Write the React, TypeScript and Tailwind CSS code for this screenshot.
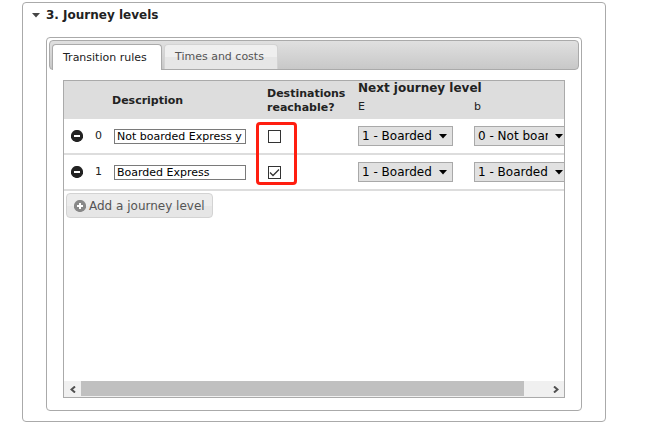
import { useState } from "react";

type Level = {
  id: number;
  description: string;
  reachable: boolean;
  next: [string, string];
};

const OPTIONS = ["0 - Not boarded Express y", "1 - Boarded Express"];

const INITIAL_LEVELS: Level[] = [
  { id: 0, description: "Not boarded Express y", reachable: false, next: [OPTIONS[1], OPTIONS[0]] },
  { id: 1, description: "Boarded Express", reachable: true, next: [OPTIONS[1], OPTIONS[1]] },
];

function CircleIcon({ plus = false, className }: { plus?: boolean; className: string }) {
  return (
    <svg viewBox="0 0 12 12" className={"size-3 shrink-0 " + className} aria-hidden="true">
      <circle cx="6" cy="6" r="6.1" fill="currentColor" />
      <path d={plus ? "M3 5h2V3h2v2h2v2H7v2H5V7H3z" : "M3 5h6v2H3z"} fill="#fff" />
    </svg>
  );
}

function LevelSelect({ label, value, onChange }: { label: string; value: string; onChange: (v: string) => void }) {
  return (
    <div className="relative h-5 w-[95px]">
      <select
        aria-label={label}
        value={value}
        onChange={(e) => onChange(e.target.value)}
        className="block h-5 w-full appearance-none rounded-none border border-[#a9a9a9] bg-[#e1e1e1] pr-5 pl-[3px] text-xs leading-4 text-black"
      >
        {OPTIONS.map((o) => (
          <option key={o}>{o}</option>
        ))}
      </select>
      <svg viewBox="0 0 8 5" className="pointer-events-none absolute top-2 right-1.5 h-[5px] w-2" aria-hidden="true">
        <path d="M0 0h8L4 4.5z" fill="#000" />
      </svg>
    </div>
  );
}

export default function App() {
  const [levels, setLevels] = useState(INITIAL_LEVELS);
  const [tab, setTab] = useState(0);

  const update = (id: number, patch: Partial<Level>) =>
    setLevels((all) => all.map((l) => (l.id === id ? { ...l, ...patch } : l)));

  return (
    <main className="bg-white pt-0.5 pr-[55px] pb-1.5 pl-[22px] font-['DejaVu_Sans',Verdana,sans-serif] text-[11px] leading-[14px] text-[#222]">
      <section className="rounded-[4px] border border-[#aaa] px-[23px] pb-2.5">
        <h3 className="-ml-3.5 flex h-[34px] items-start pt-1">
          <button type="button" className="flex items-center gap-1.5 text-xs font-bold">
            <svg viewBox="0 0 8 5" className="h-[5px] w-2" aria-hidden="true">
              <path d="M0 0h8L4 4.5z" fill="#454545" />
            </svg>
            3. Journey levels
          </button>
        </h3>

        <div className="rounded-[4px] border border-[#aaa] p-0.5">
          <div
            role="tablist"
            className="flex h-[30px] gap-0.5 rounded-[4px] border border-[#aaa] bg-linear-to-b from-[#e0e0e0] to-[#c8c8c8] pt-[3px] pl-0.5"
          >
            <button
              type="button"
              role="tab"
              aria-selected={tab === 0}
              onClick={() => setTab(0)}
              className="-mb-px w-[110px] rounded-t-[4px] border border-b-0 border-[#aaa] bg-white pl-2.5 text-left whitespace-nowrap text-[#212121]"
            >
              Transition rules
            </button>
            <button
              type="button"
              role="tab"
              aria-selected={tab === 1}
              onClick={() => setTab(1)}
              className="w-[114px] rounded-t-[4px] border border-b-0 border-[#d3d3d3] bg-linear-to-b from-[#efefef] from-50% to-[#e6e6e6] to-50% pl-2.5 text-left whitespace-nowrap text-[#555]"
            >
              Times and costs
            </button>
          </div>

          <div className="px-3.5 py-2.5">
            <div className="flex min-h-[318px] flex-col border border-[#aaa]">
              <div className="relative flex-1 overflow-hidden">
                <table className="w-[626px] table-fixed border-separate border-spacing-0">
                  <colgroup>
                    <col className="w-[26px]" />
                    <col className="w-6" />
                    <col className="w-[153px]" />
                    <col className="w-[91px]" />
                    <col className="w-[116px]" />
                    <col className="w-[216px]" />
                  </colgroup>
                  <thead className="bg-[#ddd] text-left">
                    <tr className="h-[19px]">
                      <th rowSpan={2} colSpan={3} className="pt-0.5 pl-12 font-bold">
                        Description
                      </th>
                      <th rowSpan={2} className="pt-0.5 font-bold">
                        Destinations reachable?
                      </th>
                      <th colSpan={2} className="align-top text-xs leading-[14px] font-bold">
                        Next journey level
                      </th>
                    </tr>
                    <tr className="h-[19px]">
                      <th className="align-top font-normal">E</th>
                      <th className="align-top font-normal">b</th>
                    </tr>
                  </thead>
                  <tbody>
                    {levels.map((l) => (
                      <tr key={l.id} className="h-9 *:border-b-2 *:border-[#ddd]">
                        <td className="pl-[7px]">
                          <button type="button" aria-label={`Remove level ${l.id}`} className="block">
                            <CircleIcon className="text-[#222]" />
                          </button>
                        </td>
                        <td className="pl-[5px]">{l.id}</td>
                        <td>
                          <input
                            type="text"
                            aria-label={`Description of level ${l.id}`}
                            value={l.description}
                            onChange={(e) => update(l.id, { description: e.target.value })}
                            className="block h-[15px] w-[132px] border border-[#7a7a7a] bg-white px-0.5 text-[11px] text-black"
                          />
                        </td>
                        <td className="pl-px">
                          <input
                            type="checkbox"
                            aria-label={`Destinations reachable at level ${l.id}`}
                            checked={l.reachable}
                            onChange={(e) => update(l.id, { reachable: e.target.checked })}
                            className="block size-[13px] appearance-none border border-[#333] bg-white checked:bg-[url('data:image/svg+xml,%3Csvg%20xmlns=%22http://www.w3.org/2000/svg%22%20viewBox=%220%200%2011%2011%22%3E%3Cpath%20d=%22M1%205.5L4%208.5L10%202.5%22%20fill=%22none%22%20stroke=%22%23333%22%20stroke-width=%221.3%22/%3E%3C/svg%3E')]"
                          />
                        </td>
                        <td>
                          <LevelSelect
                            label={`Next level of ${l.id} for E`}
                            value={l.next[0]}
                            onChange={(v) => update(l.id, { next: [v, l.next[1]] })}
                          />
                        </td>
                        <td>
                          <LevelSelect
                            label={`Next level of ${l.id} for b`}
                            value={l.next[1]}
                            onChange={(v) => update(l.id, { next: [l.next[0], v] })}
                          />
                        </td>
                      </tr>
                    ))}
                  </tbody>
                </table>

                <button
                  type="button"
                  className="mt-0.5 ml-0.5 flex h-[25px] items-center gap-[3px] rounded-[4px] border border-[#d3d3d3] bg-linear-to-b from-[#ececec] from-50% to-[#e6e6e6] to-50% px-[7px] text-xs whitespace-nowrap text-[#555]"
                >
                  <CircleIcon plus className="text-[#888]" />
                  Add a journey level
                </button>

                <div className="pointer-events-none absolute top-[41px] left-48 h-[63px] w-[41px] rounded-[4px] border-3 border-[#ff1e10]" />
              </div>

              <div className="flex h-4 bg-[#f0f0f0] text-[#505050]">
                <button type="button" aria-label="Scroll left" className="flex w-[17px] items-center justify-center">
                  <svg viewBox="0 0 6 7" className="h-[7px] w-1.5" aria-hidden="true">
                    <path d="M5 0.5L1.5 3.5L5 6.5" fill="none" stroke="currentColor" strokeWidth="2" />
                  </svg>
                </button>
                <div className="flex-1 pb-px">
                  <div className="h-full w-[95%] bg-[#c0c0c0]" />
                </div>
                <button type="button" aria-label="Scroll right" className="flex w-[17px] items-center justify-center">
                  <svg viewBox="0 0 6 7" className="h-[7px] w-1.5" aria-hidden="true">
                    <path d="M1 0.5L4.5 3.5L1 6.5" fill="none" stroke="currentColor" strokeWidth="2" />
                  </svg>
                </button>
              </div>
            </div>
          </div>
        </div>
      </section>
    </main>
  );
}
